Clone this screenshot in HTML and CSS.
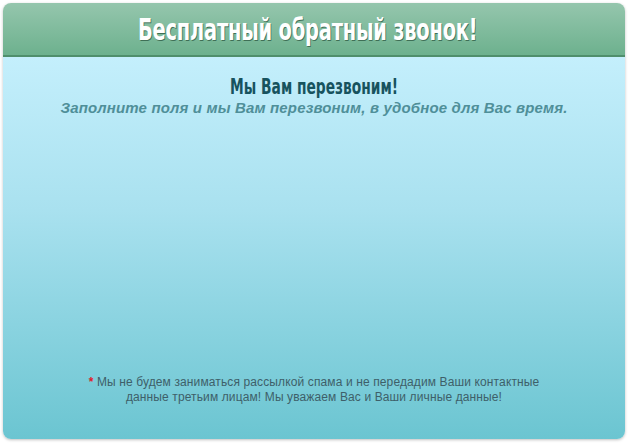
FILE: index.html
```html
<!DOCTYPE html>
<html lang="ru">
<head>
<meta charset="utf-8">
<title>Бесплатный обратный звонок</title>
<link rel="stylesheet" href="styles.css">
</head>
<body>
<div class="widget">
  <div class="widget-head">
    <h1 class="widget-title">Бесплатный обратный звонок!</h1>
  </div>
  <div class="widget-body">
    <h2 class="lead">Мы Вам перезвоним!</h2>
    <p class="sub">Заполните поля и мы Вам перезвоним, в удобное для Вас время.</p>
    <div class="spacer"></div>
    <p class="note"><span class="star">*</span> Мы не будем заниматься рассылкой спама и не передадим Ваши контактные<br>данные третьим лицам! Мы уважаем Вас и Ваши личные данные!</p>
  </div>
</div>
</body>
</html>
```

FILE: styles.css
```css
html, body {
  margin: 0;
  padding: 0;
  background: #ffffff;
}
body {
  padding: 3px 4px 5px 3px;
  width: 629px;
  height: 444px;
  box-sizing: border-box;
}
.widget {
  width: 622px;
  height: 436px;
  border-radius: 8px;
  overflow: hidden;
  display: flex;
  flex-direction: column;
  box-shadow: 0 1px 3px rgba(0,0,0,0.25);
}
.widget-head {
  height: 52px;
  flex: none;
  background: linear-gradient(to bottom, #95c6ad 0%, #6db18e 100%);
  border-bottom: 2px solid #4f8f6c;
  display: flex;
  align-items: center;
  justify-content: center;
  padding-right: 12px;
}
.widget-title {
  margin: 0;
  font-family: "DejaVu Sans", sans-serif;
  font-stretch: condensed;
  font-weight: bold;
  font-size: 30px;
  color: #ffffff;
  text-shadow: 1px 1px 0 #3f6f56;
  transform: scaleX(0.72);
  white-space: nowrap;
  letter-spacing: -0.3px;
}
.widget-body {
  flex: 1;
  background: linear-gradient(to bottom, #c4effc 0%, #a9e1ef 40%, #6bc5d1 100%);
  display: flex;
  flex-direction: column;
  align-items: center;
  padding-top: 19px;
}
.lead {
  margin: 0;
  font-family: "DejaVu Sans", sans-serif;
  font-stretch: condensed;
  font-weight: bold;
  font-size: 21px;
  line-height: 23px;
  color: #17535e;
  transform: scaleX(0.73);
  white-space: nowrap;
}
.sub {
  margin: 0;
  font-family: "Liberation Sans", Arial, sans-serif;
  font-weight: bold;
  font-style: italic;
  font-size: 15px;
  letter-spacing: 0.15px;
  line-height: 17px;
  color: #4f8f99;
}
.spacer {
  flex: 1;
}
.note {
  margin: 0 0 34px;
  font-family: "Liberation Sans", Arial, sans-serif;
  font-size: 12px;
  letter-spacing: 0.12px;
  line-height: 15px;
  color: #3e5f69;
  text-align: center;
}
.star {
  color: #e0202a;
  font-weight: bold;
}
```
